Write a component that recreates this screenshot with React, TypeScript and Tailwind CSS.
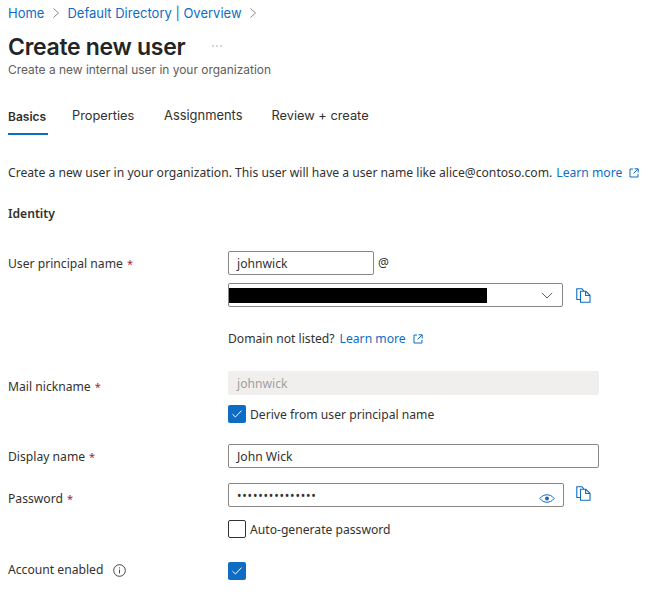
import React from "react";

const Chevron = () => (
  <svg width="8" height="12" viewBox="0 0 8 12" fill="none" stroke="#8a8886" strokeWidth="1">
    <path d="M1.5 1.5 L6.5 6 L1.5 10.5" />
  </svg>
);

const External = () => (
  <svg width="10" height="10" viewBox="0 0 10 10" fill="none" stroke="#0f6cbd" strokeWidth="1">
    <path d="M4 1H1v8h8V6M5.5 .8h3.7v3.7M9 1L4.5 5.5" />
  </svg>
);

const Copy = () => (
  <svg width="15" height="15" viewBox="0 0 15 15" fill="none" stroke="#0f6cbd" strokeWidth="1.1">
    <path d="M4.5 11.5H.8V.8H6l1.8 2" />
    <path d="M4.5 3.3h5.3l4.2 4v7H4.5z" />
    <path d="M9.6 3.3v4.2H14" />
  </svg>
);

const Check = ({ on = true }: { on?: boolean }) => (
  <span
    className={
      on
        ? "flex h-[18px] w-[18px] items-center justify-center rounded-[2px] bg-[#0f6cc4]"
        : "flex h-[18px] w-[18px] items-center justify-center rounded-[2px] border border-[#323130] bg-white"
    }
  >
    {on && (
      <svg width="12" height="10" viewBox="0 0 12 10" fill="none" stroke="#ffffff" strokeWidth="1">
        <path d="M1.5 5.2 L4.4 8 L10.5 1.6" />
      </svg>
    )}
  </span>
);

const Star = () => <span className="ml-[4px] text-[11px] text-[#a4262c]">*</span>;

const Label = ({ children }: { children: React.ReactNode }) => (
  <div className="w-[220px] shrink-0 text-[#323130]">{children}</div>
);

const inputBox =
  "flex h-6 items-center rounded-[2px] border border-[#8a8886] bg-white px-2 pt-[1px] text-[#323130]";

export default function App() {
  return (
    <div
      className="h-[603px] w-[669px] overflow-hidden bg-white pl-2 text-[12.15px] leading-4 text-[#323130]"
      style={{ fontFamily: '"Noto Sans", sans-serif' }}
    >
      <div className="flex h-[26px] items-center gap-[7.5px] font-['Inter',sans-serif] text-[13px] text-[#0f6cc4]">
        <span>Home</span>
        <Chevron />
        <span>Default Directory | Overview</span>
        <Chevron />
      </div>

      <div className="mt-[7px] flex h-7 items-center font-['Inter',sans-serif]">
        <h1 className="text-[23px] font-semibold tracking-[-0.3px] text-[#242424]">Create new user</h1>
        <svg className="ml-[27px] mb-[3px]" width="10" height="2" viewBox="0 0 10 2" fill="#8a8886">
          <circle cx="1" cy="1" r="0.7" />
          <circle cx="5" cy="1" r="0.7" />
          <circle cx="9" cy="1" r="0.7" />
        </svg>
      </div>
      <p className="mt-[1px] font-['Inter',sans-serif] text-[11.95px] text-[#605e5c]">
        Create a new internal user in your organization
      </p>

      <div className="mt-[28px] flex h-[29px] items-start font-['Inter',sans-serif] text-[13px] leading-5">
        <div className="relative h-[29px] w-10">
          <span className="text-[12px] font-semibold text-[#323130]">Basics</span>
          <div className="absolute right-0 bottom-0 left-0 h-[2px] bg-[#0f6cc4]" />
        </div>
        <span className="ml-6 w-[63px] text-[12.8px] text-[#323130]">Properties</span>
        <span className="ml-[29px] text-[12.9px] text-[#323130]">Assignments</span>
        <span className="ml-[29px] text-[12.8px] text-[#323130]">Review + create</span>
      </div>

      <div className="mt-[30px] flex h-4 items-center whitespace-nowrap">
        <span>Create a new user in your organization. This user will have a user name like alice@contoso.com.</span>
        <span className="ml-[4px] text-[#0f6cc4]">Learn more</span>
        <span className="ml-[7px]">
          <External />
        </span>
      </div>

      <div className="mt-[25px] h-4 font-semibold text-[#323130]">Identity</div>

      <div className="mt-[29px] flex">
        <Label>
          <div className="pt-[5px]">
            User principal name
            <Star />
          </div>
        </Label>
        <div>
          <div className="flex items-center">
            <div className={`${inputBox} w-[146px]`}>johnwick</div>
            <span className="ml-[4px]">@</span>
          </div>
          <div className="mt-[8px] flex items-center">
            <div className="flex h-6 w-[335px] items-center justify-between rounded-[2px] border border-[#8a8886] bg-white pr-[9px]">
              <div className="h-[15px] w-[258px] bg-black" />
              <svg width="12" height="7" viewBox="0 0 12 7" fill="none" stroke="#605e5c" strokeWidth="1">
                <path d="M.8 .8 L6 6 L11.2 .8" />
              </svg>
            </div>
            <span className="ml-[13px]">
              <Copy />
            </span>
          </div>
          <div className="mt-[24px] flex h-4 items-center">
            <span>Domain not listed?</span>
            <span className="ml-[5px] text-[#0f6cc4]">Learn more</span>
            <span className="ml-[7px]">
              <External />
            </span>
          </div>
        </div>
      </div>

      <div className="mt-[24px] flex">
        <Label>
          <div className="pt-[8px]">
            Mail nickname
            <Star />
          </div>
        </Label>
        <div>
          <div className="flex h-6 w-[371px] items-center rounded-[2px] bg-[#f0efee] px-[9px] pt-[1px] text-[#a19f9d]">
            johnwick
          </div>
          <div className="mt-[10px] flex items-center gap-1">
            <Check />
            <span className="pt-[1px]">Derive from user principal name</span>
          </div>
        </div>
      </div>

      <div className="mt-[21px] flex items-center">
        <Label>
          <div className="pt-[1px]">
            Display name
            <Star />
          </div>
        </Label>
        <div className={`${inputBox} w-[371px]`}>John Wick</div>
      </div>

      <div className="mt-[15px] flex">
        <Label>
          <div className="pt-[8px]">
            Password
            <Star />
          </div>
        </Label>
        <div>
          <div className="flex items-center">
            <div className={`${inputBox} w-[336px] justify-between pr-[8px]`}>
              <span className="text-[12px] leading-none tracking-[0.8px] text-[#323130]">•••••••••••••••</span>
              <svg className="mt-[6px]" width="16" height="9" viewBox="0 0 16 9" fill="none" stroke="#0f6cbd" strokeWidth="1">
                <path d="M.8 4.5C3 1.8 5.3 .8 8 .8S13 1.8 15.2 4.5C13 7.2 10.7 8.2 8 8.2S3 7.2 .8 4.5z" />
                <circle cx="8" cy="4.5" r="2" fill="#0f6cbd" stroke="none" />
              </svg>
            </div>
            <span className="ml-[12px] -mt-[3px]">
              <Copy />
            </span>
          </div>
          <div className="mt-[13px] flex items-center gap-1">
            <Check on={false} />
            <span className="pt-[1px]">Auto-generate password</span>
          </div>
        </div>
      </div>

      <div className="mt-[24px] flex items-center">
        <Label>
          <div className="-mt-[2px] flex items-center">
            <span>Account enabled</span>
            <svg className="ml-[10px]" width="13" height="13" viewBox="0 0 13 13" fill="none" stroke="#323130" strokeWidth="0.9">
              <circle cx="6.5" cy="6.5" r="5.8" />
              <path d="M6.5 5.6v3.8M6.5 3.4v1" />
            </svg>
          </div>
        </Label>
        <Check />
      </div>
    </div>
  );
}
